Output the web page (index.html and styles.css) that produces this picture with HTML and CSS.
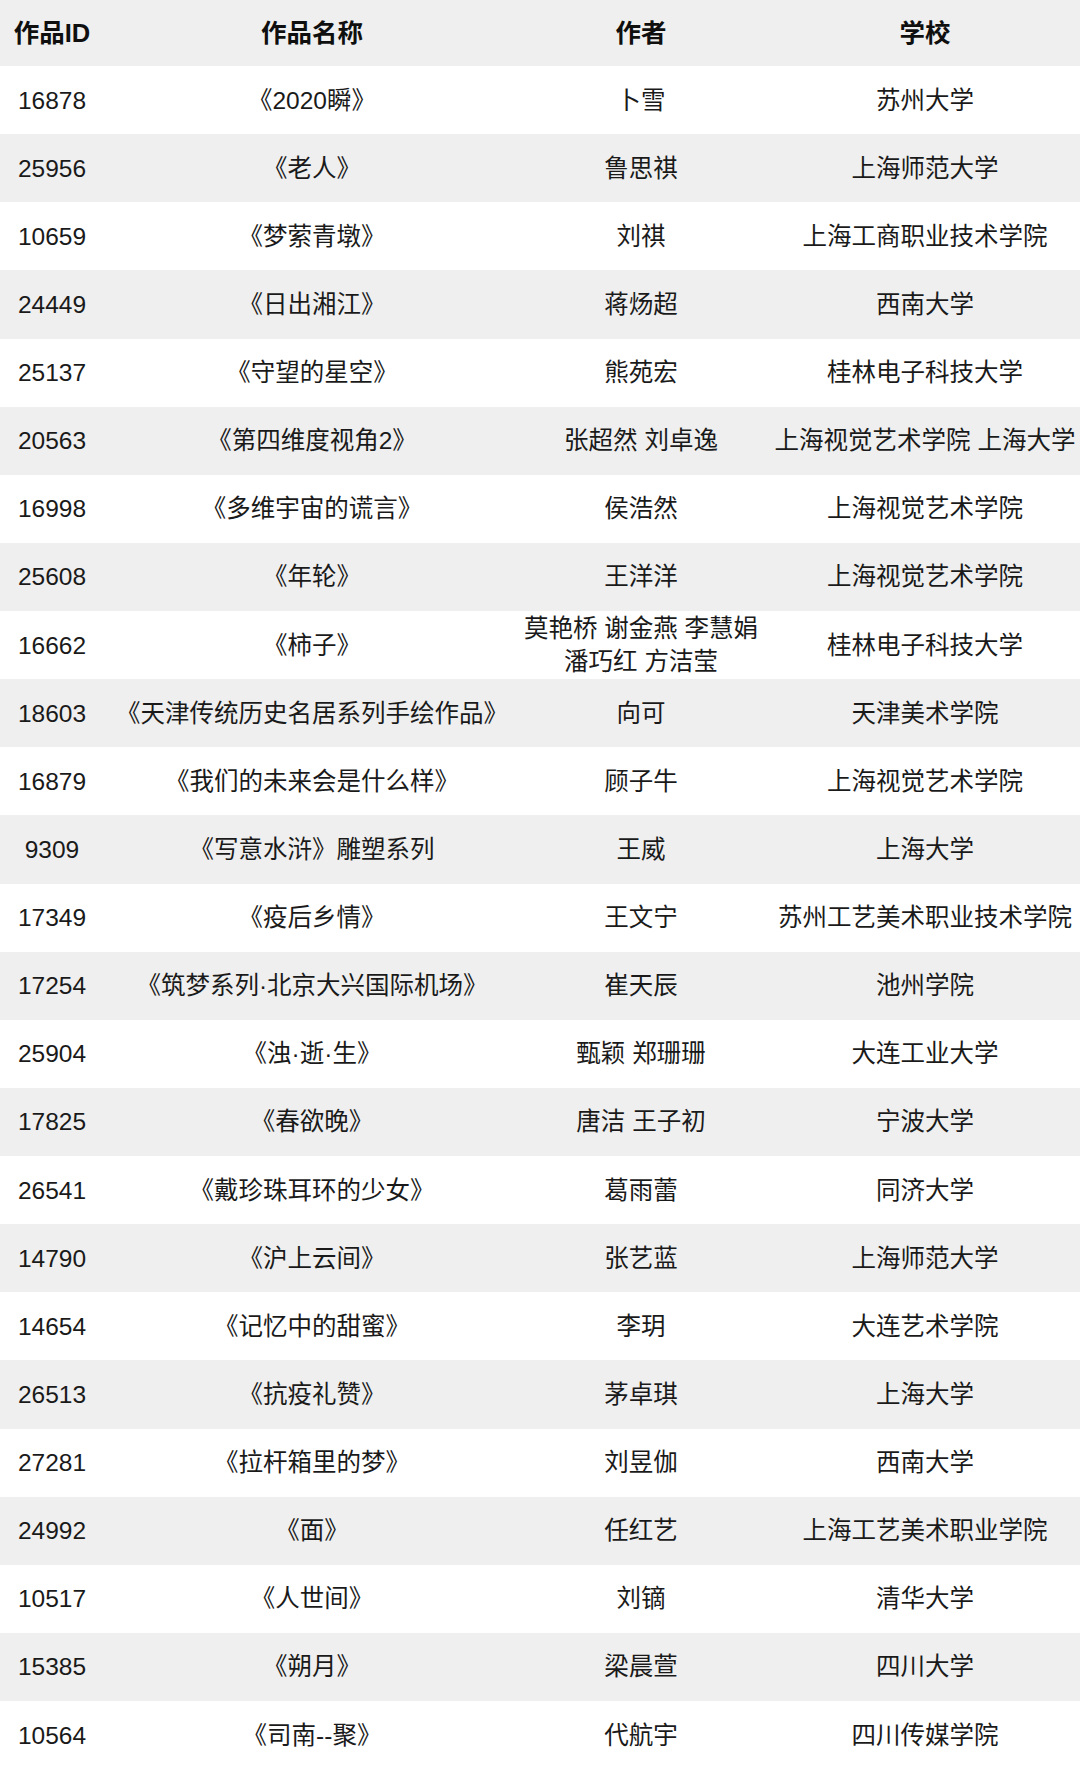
FILE: index.html
```html
<!DOCTYPE html>
<html lang="zh-CN">
<head>
<meta charset="utf-8">
<title>作品列表</title>
<link rel="stylesheet" href="styles.css">
</head>
<body>
<div class="table">
  <div class="row head"><div class="c">作品ID</div><div class="c">作品名称</div><div class="c">作者</div><div class="c">学校</div></div>
  <div class="row"><div class="c">16878</div><div class="c">《2020瞬》</div><div class="c">卜雪</div><div class="c">苏州大学</div></div>
  <div class="row"><div class="c">25956</div><div class="c">《老人》</div><div class="c">鲁思祺</div><div class="c">上海师范大学</div></div>
  <div class="row"><div class="c">10659</div><div class="c">《梦萦青墩》</div><div class="c">刘祺</div><div class="c">上海工商职业技术学院</div></div>
  <div class="row"><div class="c">24449</div><div class="c">《日出湘江》</div><div class="c">蒋炀超</div><div class="c">西南大学</div></div>
  <div class="row"><div class="c">25137</div><div class="c">《守望的星空》</div><div class="c">熊苑宏</div><div class="c">桂林电子科技大学</div></div>
  <div class="row"><div class="c">20563</div><div class="c">《第四维度视角2》</div><div class="c">张超然 刘卓逸</div><div class="c">上海视觉艺术学院 上海大学</div></div>
  <div class="row"><div class="c">16998</div><div class="c">《多维宇宙的谎言》</div><div class="c">侯浩然</div><div class="c">上海视觉艺术学院</div></div>
  <div class="row"><div class="c">25608</div><div class="c">《年轮》</div><div class="c">王洋洋</div><div class="c">上海视觉艺术学院</div></div>
  <div class="row"><div class="c">16662</div><div class="c">《柿子》</div><div class="c">莫艳桥 谢金燕 李慧娟<br>潘巧红 方洁莹</div><div class="c">桂林电子科技大学</div></div>
  <div class="row"><div class="c">18603</div><div class="c">《天津传统历史名居系列手绘作品》</div><div class="c">向可</div><div class="c">天津美术学院</div></div>
  <div class="row"><div class="c">16879</div><div class="c">《我们的未来会是什么样》</div><div class="c">顾子牛</div><div class="c">上海视觉艺术学院</div></div>
  <div class="row"><div class="c">9309</div><div class="c">《写意水浒》雕塑系列</div><div class="c">王威</div><div class="c">上海大学</div></div>
  <div class="row"><div class="c">17349</div><div class="c">《疫后乡情》</div><div class="c">王文宁</div><div class="c">苏州工艺美术职业技术学院</div></div>
  <div class="row"><div class="c">17254</div><div class="c">《筑梦系列·北京大兴国际机场》</div><div class="c">崔天辰</div><div class="c">池州学院</div></div>
  <div class="row"><div class="c">25904</div><div class="c">《浊·逝·生》</div><div class="c">甄颖 郑珊珊</div><div class="c">大连工业大学</div></div>
  <div class="row"><div class="c">17825</div><div class="c">《春欲晚》</div><div class="c">唐洁 王子初</div><div class="c">宁波大学</div></div>
  <div class="row"><div class="c">26541</div><div class="c">《戴珍珠耳环的少女》</div><div class="c">葛雨蕾</div><div class="c">同济大学</div></div>
  <div class="row"><div class="c">14790</div><div class="c">《沪上云间》</div><div class="c">张艺蓝</div><div class="c">上海师范大学</div></div>
  <div class="row"><div class="c">14654</div><div class="c">《记忆中的甜蜜》</div><div class="c">李玥</div><div class="c">大连艺术学院</div></div>
  <div class="row"><div class="c">26513</div><div class="c">《抗疫礼赞》</div><div class="c">茅卓琪</div><div class="c">上海大学</div></div>
  <div class="row"><div class="c">27281</div><div class="c">《拉杆箱里的梦》</div><div class="c">刘昱伽</div><div class="c">西南大学</div></div>
  <div class="row"><div class="c">24992</div><div class="c">《面》</div><div class="c">任红艺</div><div class="c">上海工艺美术职业学院</div></div>
  <div class="row"><div class="c">10517</div><div class="c">《人世间》</div><div class="c">刘镝</div><div class="c">清华大学</div></div>
  <div class="row"><div class="c">15385</div><div class="c">《朔月》</div><div class="c">梁晨萱</div><div class="c">四川大学</div></div>
  <div class="row"><div class="c">10564</div><div class="c">《司南--聚》</div><div class="c">代航宇</div><div class="c">四川传媒学院</div></div>
</div>
</body>
</html>
```

FILE: styles.css
```css
html, body {
  margin: 0;
  padding: 0;
  background: #ffffff;
  overflow: hidden;
}

body {
  font-family: "Liberation Sans", "Noto Sans CJK SC", sans-serif;
  font-size: 24.5px;
  color: #1a1a1a;
  width: 1080px;
}

.table {
  width: 1088px;
  padding-bottom: 9px;
}

.row {
  display: grid;
  grid-template-columns: 104px 416px 242px 326px;
  height: 68.125px;
  align-items: center;
}

.row:nth-child(odd) {
  background: #efefef;
}

.row.head {
  height: 66px;
  font-size: 25.5px;
  font-weight: bold;
  color: #0f0f0f;
}

.c {
  text-align: center;
  white-space: nowrap;
  line-height: 33px;
}
```
